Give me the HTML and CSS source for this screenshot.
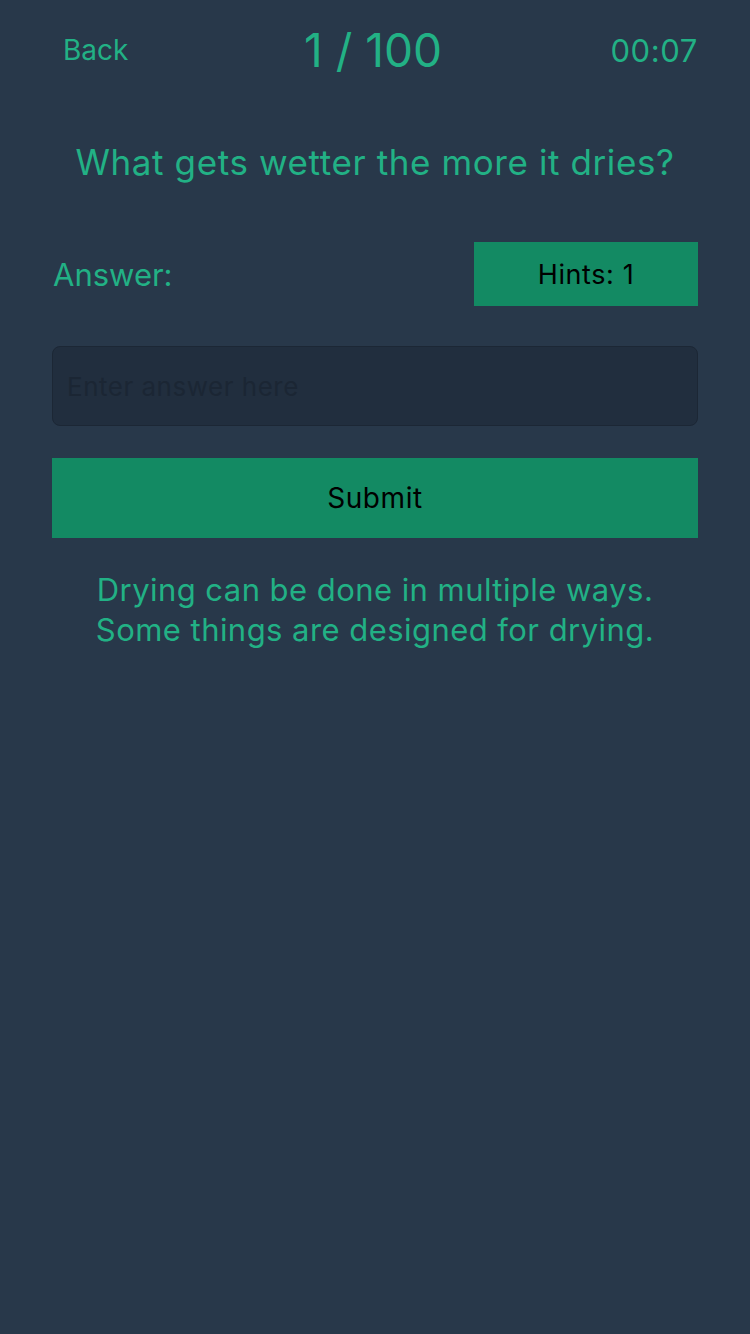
FILE: index.html
```html
<!DOCTYPE html>
<html>
<head>
<meta charset="utf-8">
<link rel="stylesheet" href="styles.css">
</head>
<body>
<div class="screen">
  <div class="top">
    <span class="back">Back</span>
    <span class="count">1 / 100</span>
    <span class="timer">00:07</span>
  </div>
  <div class="question">What gets wetter the more it dries?</div>
  <div class="answer-row">
    <span class="answer-label">Answer:</span>
    <div class="hints">Hints: 1</div>
  </div>
  <div class="input"><span class="placeholder">Enter answer here</span></div>
  <div class="submit">Submit</div>
  <div class="hint-text">Drying can be done in multiple ways.<br>Some things are designed for drying.</div>
</div>
</body>
</html>
```
FILE: styles.css
```css
html, body { margin: 0; padding: 0; }
body { background: #28384a; font-family: Inter, Roboto, "Noto Sans", sans-serif; }
.screen { width: 750px; height: 1334px; background: #28384a; color: #22b185; }
.top { display: grid; grid-template-columns: 1fr auto 1fr; align-items: center; height: 100px; padding: 0 52px; box-sizing: border-box; }
.back { font-size: 28px; padding-left: 11px; }
.count { font-size: 46px; margin-right: 4px; }
.timer { font-size: 31px; text-align: right; letter-spacing: 0.6px; }
.question { font-size: 35px; letter-spacing: 0.6px; text-align: center; margin-top: 40px; line-height: 44px; }
.answer-row { display: flex; justify-content: space-between; align-items: center; margin: 58px 52px 0 53px; }
.answer-label { font-size: 31px; }
.hints { width: 224px; height: 64px; background: #138a63; color: #000; font-size: 27px; letter-spacing: 0.6px; display: flex; align-items: center; justify-content: center; }
.input { margin: 40px 52px 0 52px; height: 80px; box-sizing: border-box; background: #212e3e; border: 1px solid #1c2735; border-radius: 8px; display: flex; align-items: center; padding-left: 14px; }
.placeholder { color: #1b2634; font-size: 26px; letter-spacing: 0.5px; }
.submit { margin: 32px 52px 0 52px; height: 80px; background: #138a63; color: #000; font-size: 28px; letter-spacing: 0.6px; display: flex; align-items: center; justify-content: center; }
.hint-text { text-align: center; font-size: 31px; letter-spacing: 0.45px; line-height: 40px; margin-top: 32px; }
```
